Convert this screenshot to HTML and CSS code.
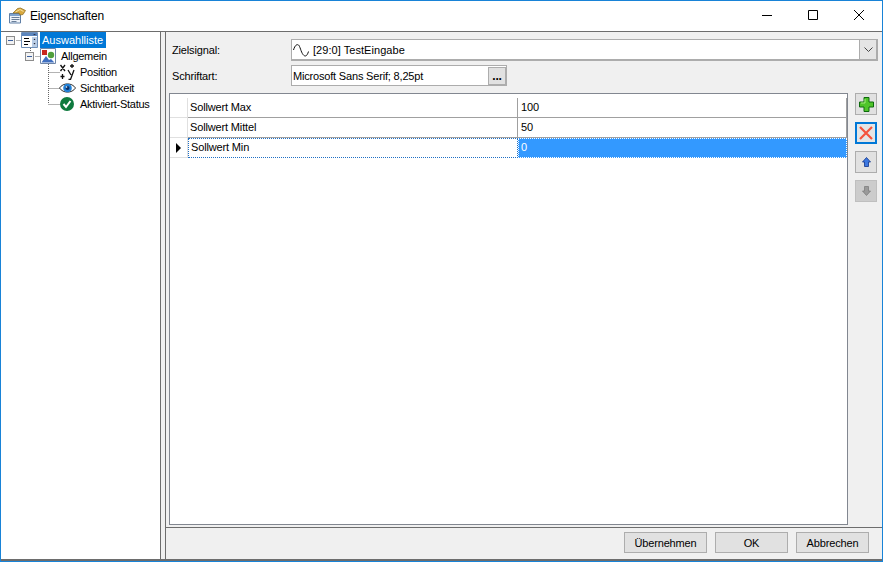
FILE: index.html
```html
<!DOCTYPE html>
<html lang="de">
<head>
<meta charset="utf-8">
<title>Eigenschaften</title>
<link rel="stylesheet" href="styles.css">
</head>
<body>
<div class="window">
  <header class="titlebar">
    <svg class="title-icon" width="17" height="17" viewBox="0 0 17 17">
      <path d="M.5 6.500h11v9.500H.5z" fill="#eef3fa" stroke="#5f7fa6"/>
      <path d="M1 7h10v2H1z" fill="#7fa3cf"/>
      <path d="M2.500 10.500h8M2.500 12.500h8M2.500 14.500h5" stroke="#6a7f9a"/>
      <path d="M4 6 8.500 1.500l3-.5 5 2.500-2.500 4-3 .5-1-2z" fill="#d9a93e" stroke="#8a6a1f" stroke-width=".7"/>
      <path d="M6.500 5 11 2.500l3.500 2" stroke="#f5e2a4" fill="none"/>
    </svg>
    <span class="title-text">Eigenschaften</span>
    <div class="caption">
      <svg class="cap-btn" width="46" height="30" viewBox="0 0 46 30"><path d="M18 15.500h10" stroke="#000" fill="none"/></svg>
      <svg class="cap-btn" width="46" height="30" viewBox="0 0 46 30"><path d="M18.500 10.500h9v9h-9z" stroke="#000" fill="none"/></svg>
      <svg class="cap-btn" width="46" height="30" viewBox="0 0 46 30"><path d="M18 10l10 10M28 10 18 20" stroke="#000" fill="none"/></svg>
    </div>
  </header>
  <div class="main">
    <nav class="tree">
      <svg class="tree-lines" width="80" height="90" viewBox="0 0 80 90">
        <path d="M15.500 8.500h5M29.500 16v8M34.500 24.500h5M47.500 32v40M47.500 40.500h12M47.500 56.500h12M47.500 72.500h12" stroke="#666" stroke-dasharray="1 1" fill="none"/>
      </svg>
      <div class="tree-row level-0">
        <span class="expander"></span>
        <svg class="node-icon" width="17" height="16" viewBox="0 0 17 16">
          <path d="M.5.500h16v15H.5z" fill="#fff" stroke="#6f8fb8"/>
          <path d="M1 1h15v3H1z" fill="#5b85bd"/>
          <path d="M11 5h5v10h-5z" fill="#b9cde6"/>
          <path d="M3 6.500h5M3 9.500h6M3 12.500h4" stroke="#000"/>
          <path d="M12.500 8l1-1.500 1 1.500zM12.500 11l1 1.500 1-1.500zM12 2l1.500 1L15 2z" fill="#223"/>
        </svg>
        <span class="tree-label selected">Auswahlliste</span>
      </div>
      <div class="tree-row level-1">
        <span class="expander"></span>
        <svg class="node-icon" width="17" height="16" viewBox="0 0 17 16">
          <path d="M.5.500h15v15H.5z" fill="#fff" stroke="#6f86a8"/>
          <path d="M2 2h5v5H2z" fill="#c8281e"/>
          <circle cx="11" cy="7" r="3.200" fill="#4f9e3c"/>
          <path d="M1.500 14.500 6 8l3 4 2-1 3.500 3.500z" fill="#3f6fc0"/>
        </svg>
        <span class="tree-label">Allgemein</span>
      </div>
      <div class="tree-row level-2">
        <svg class="node-icon" width="17" height="16" viewBox="0 0 17 16">
          <path d="M1.500 1 6 7M6 1 1.500 7M9 6l3 5M15 6l-3.500 9.500H9.500M3.500 10v5M1.500 12.500h4M13 0v4M11 2h4" stroke="#111" stroke-width="1.300" fill="none"/>
        </svg>
        <span class="tree-label">Position</span>
      </div>
      <div class="tree-row level-2">
        <svg class="node-icon" width="17" height="16" viewBox="0 0 17 16">
          <path d="M.5 8C4 2.500 13 2.500 16.500 8 13 13.500 4 13.500.5 8z" fill="#fff" stroke="#333"/>
          <circle cx="8.500" cy="8" r="4.300" fill="#1f7fd6"/>
          <circle cx="8.500" cy="8" r="2" fill="#0b2f66"/>
          <circle cx="7.500" cy="7" r=".8" fill="#fff"/>
        </svg>
        <span class="tree-label">Sichtbarkeit</span>
      </div>
      <div class="tree-row level-2">
        <svg class="node-icon" width="17" height="16" viewBox="0 0 17 16">
          <circle cx="8" cy="8" r="7" fill="#0f7a3e"/>
          <path d="M4.500 8l2.500 3 4.500-6" stroke="#fff" stroke-width="2" fill="none"/>
        </svg>
        <span class="tree-label">Aktiviert-Status</span>
      </div>
    </nav>
    <div class="splitter"></div>
    <section class="panel">
      <div class="content">
        <div class="form">
          <div class="field-row signal-row">
            <label class="field-label">Zielsignal:</label>
            <div class="combo">
              <svg class="signal-icon" width="18" height="14" viewBox="0 0 18 14">
                <path d="M.5 7C2 2 4 1 5.500 2S8 9 10 11.500s4 2 5.500-3" stroke="#111" fill="none"/>
              </svg>
              <span class="combo-text">[29:0] TestEingabe</span>
              <span class="combo-btn">
                <svg width="9" height="5" viewBox="0 0 9 5"><path d="M.5.500l4 4 4-4" stroke="#444" fill="none"/></svg>
              </span>
            </div>
          </div>
          <div class="field-row font-row">
            <label class="field-label">Schriftart:</label>
            <div class="fontbox">
              <span class="font-text">Microsoft Sans Serif; 8,25pt</span>
              <span class="dots-btn">...</span>
            </div>
          </div>
        </div>
        <div class="grid-area">
          <div class="grid">
            <div class="grid-row">
              <div class="row-head"></div>
              <div class="cell name">Sollwert Max</div>
              <div class="cell value">100</div>
            </div>
            <div class="grid-row">
              <div class="row-head"></div>
              <div class="cell name">Sollwert Mittel</div>
              <div class="cell value">50</div>
            </div>
            <div class="grid-row current">
              <div class="row-head"><span class="row-arrow"></span></div>
              <div class="cell name focus">Sollwert Min</div>
              <div class="cell value active">0</div>
            </div>
          </div>
          <div class="tools">
            <button class="tool" type="button" aria-label="Hinzufügen">
              <svg width="15" height="15" viewBox="0 0 15 15"><path d="M5 .500h5V5h4.500v5H10v4.500H5V10H.5V5H5z" fill="#4fc42a" stroke="#0c6a0c"/><path d="M6 2v4H2" stroke="#a3ea7c" fill="none"/></svg>
            </button>
            <button class="tool tool-focus" type="button" aria-label="Löschen">
              <svg width="14" height="14" viewBox="0 0 14 14"><path d="M1 1l12 12M13 1 1 13" stroke="#f4533c" stroke-width="2.200" fill="none"/></svg>
            </button>
            <button class="tool" type="button" aria-label="Nach oben">
              <svg width="9" height="10" viewBox="0 0 9 10"><path d="M4.500.500l4 4.500H6.500v4.500h-4V5H.5z" fill="#3d78e0" stroke="#12358c" stroke-width=".8"/></svg>
            </button>
            <button class="tool tool-disabled" type="button" aria-label="Nach unten" disabled>
              <svg width="9" height="10" viewBox="0 0 9 10"><path d="M4.500 9.500l4-4.500H6.500V.5h-4V5H.5z" fill="#9a9a9a" stroke="#7d7d7d" stroke-width=".8"/></svg>
            </button>
          </div>
        </div>
      </div>
      <footer class="footer">
        <button class="btn btn-wide" type="button">Übernehmen</button>
        <button class="btn" type="button">OK</button>
        <button class="btn" type="button">Abbrechen</button>
      </footer>
    </section>
  </div>
</div>
</body>
</html>
```

FILE: styles.css
```css
* { box-sizing: border-box; }
html, body { margin: 0; padding: 0; }
body {
  width: 883px;
  height: 562px;
  overflow: hidden;
  font-family: "Liberation Sans", Arial, sans-serif;
  font-size: 11px;
  letter-spacing: -0.15px;
  color: #000;
}
.window {
  width: 883px;
  height: 562px;
  display: flex;
  flex-direction: column;
  background: #f0f0f0;
  border: 1px solid #1883d7;
}
.titlebar {
  height: 31px;
  flex: none;
  display: flex;
  align-items: center;
  background: #fff;
  border-bottom: 1px solid #6d6d6d;
  padding-left: 8px;
}
.title-icon { margin-right: 4px; margin-top: -1px; }
.title-text { font-size: 12px; margin-top: -1px; }
.caption { margin-left: auto; display: flex; margin-top: -2px; }
.cap-btn { display: block; }
.main { flex: 1; display: flex; min-height: 0; border-bottom: 2px solid #6d6d6d; }
.tree {
  position: relative;
  width: 160px;
  flex: none;
  background: #fff;
  border-right: 1px solid #6d6d6d;
  letter-spacing: -0.28px;
}
.tree-lines { position: absolute; left: 0; top: 0; }
.tree-row {
  position: relative;
  height: 16px;
  display: flex;
  align-items: center;
}
.level-0 { padding-left: 5px; }
.level-1 { padding-left: 24px; }
.level-2 { padding-left: 58px; }
.expander {
  width: 9px;
  height: 9px;
  border: 1px solid #8c8c8c;
  background: linear-gradient(#3a5f9e, #3a5f9e) center / 5px 1px no-repeat, #f2f2f2;
  flex: none;
  margin-right: 6px;
}
.node-icon { flex: none; display: block; }
.tree-label { margin-left: 2px; padding: 0 2px; height: 16px; line-height: 16px; white-space: nowrap; }
.selected { background: #0078d7; color: #fff; letter-spacing: 0; padding-right: 3px; }
.splitter { flex: none; background: #f0f0f0; border-right: 1px solid #6d6d6d; width: 5px; }
.panel { flex: 1; min-width: 0; display: flex; flex-direction: column; background: #f0f0f0; }
.content { flex: 1; min-height: 0; display: flex; flex-direction: column; padding: 7px 4px 2px 3px; }
.form { flex: none; }
.field-row { display: flex; align-items: center; }
.signal-row { height: 22px; }
.font-row { height: 21px; margin-top: 4px; }
.field-label { width: 122px; flex: none; padding-left: 3px; }
.combo {
  flex: 1;
  height: 22px;
  display: flex;
  align-items: center;
  background: #fff;
  border: 2px solid #acacac;
  border-width: 1px 2px 2px 1px;
  min-width: 0;
}
.signal-icon { margin-left: 1px; margin-right: 2px; flex: none; }
.combo-text { flex: 1; letter-spacing: 0.05px; }
.combo-btn {
  width: 17px;
  height: 100%;
  flex: none;
  display: flex;
  align-items: center;
  justify-content: center;
  background: #e5e5e5;
  border-left: 1px solid #acacac;
}
.fontbox {
  width: 216px;
  height: 21px;
  display: flex;
  align-items: center;
  background: #fff;
  border: 1px solid #acacac;
  padding-left: 1px;
  flex: none;
}
.font-text { flex: 1; letter-spacing: -0.18px; }
.dots-btn {
  width: 18px;
  height: 18px;
  background: #e1e1e1;
  border: 1px solid #adadad;
  font-weight: bold;
  font-size: 12px;
  text-align: center;
  line-height: 16px;
}
.grid-area { flex: 1; min-height: 0; display: flex; margin-top: 7px; }
.grid {
  width: 679px;
  flex: none;
  background: #fff;
  border: 1px solid #828790;
  padding-top: 4px;
}
.grid-row { display: flex; height: 20px; }
.row-head { width: 18px; flex: none; position: relative; background: #fff; border-right: 1px solid #e0e0e0; border-bottom: 1px solid #e0e0e0; }
.row-arrow {
  position: absolute;
  left: 6px;
  top: 5px;
  width: 0;
  height: 0;
  border-left: 5px solid #000;
  border-top: 5px solid transparent;
  border-bottom: 5px solid transparent;
}
.cell {
  line-height: 19px;
  padding-left: 2px;
  border-bottom: 1px solid #a0a0a0;
  border-right: 1px solid #a0a0a0;
  white-space: nowrap;
}
.name { width: 330px; flex: none; }
.value { flex: 1; padding-left: 3px; }
.focus { border: 1px dotted #1f6fc4; line-height: 17px; padding-left: 1px; }
.current .focus { padding-left: 2px; }
.active { background: #3399ff; color: #fff; border: 1px dotted #fff; line-height: 17px; padding-left: 2px; }
.tools { flex: 1; display: flex; flex-direction: column; gap: 7px; padding: 0 0 0 7px; }
.tool {
  width: 22px;
  height: 22px;
  padding: 0;
  flex: none;
  display: flex;
  align-items: center;
  justify-content: center;
  background: #e1e1e1;
  border: 1px solid #adadad;
}
.tool-focus { border: 2px solid #0078d7; background: #e5e5e5; }
.tool-disabled { background: #cccccc; border-color: #bfbfbf; }
.footer {
  flex: none;
  height: 32px;
  display: flex;
  justify-content: flex-end;
  align-items: flex-start;
  gap: 8px;
  padding: 4px 13px 0 0;
  border-top: 1px solid #6d6d6d;
}
.btn {
  width: 73px;
  height: 21px;
  padding: 0;
  font: inherit;
  letter-spacing: inherit;
  color: #000;
  background: #e1e1e1;
  border: 1px solid #adadad;
}
.btn-wide { width: 83px; }
```
